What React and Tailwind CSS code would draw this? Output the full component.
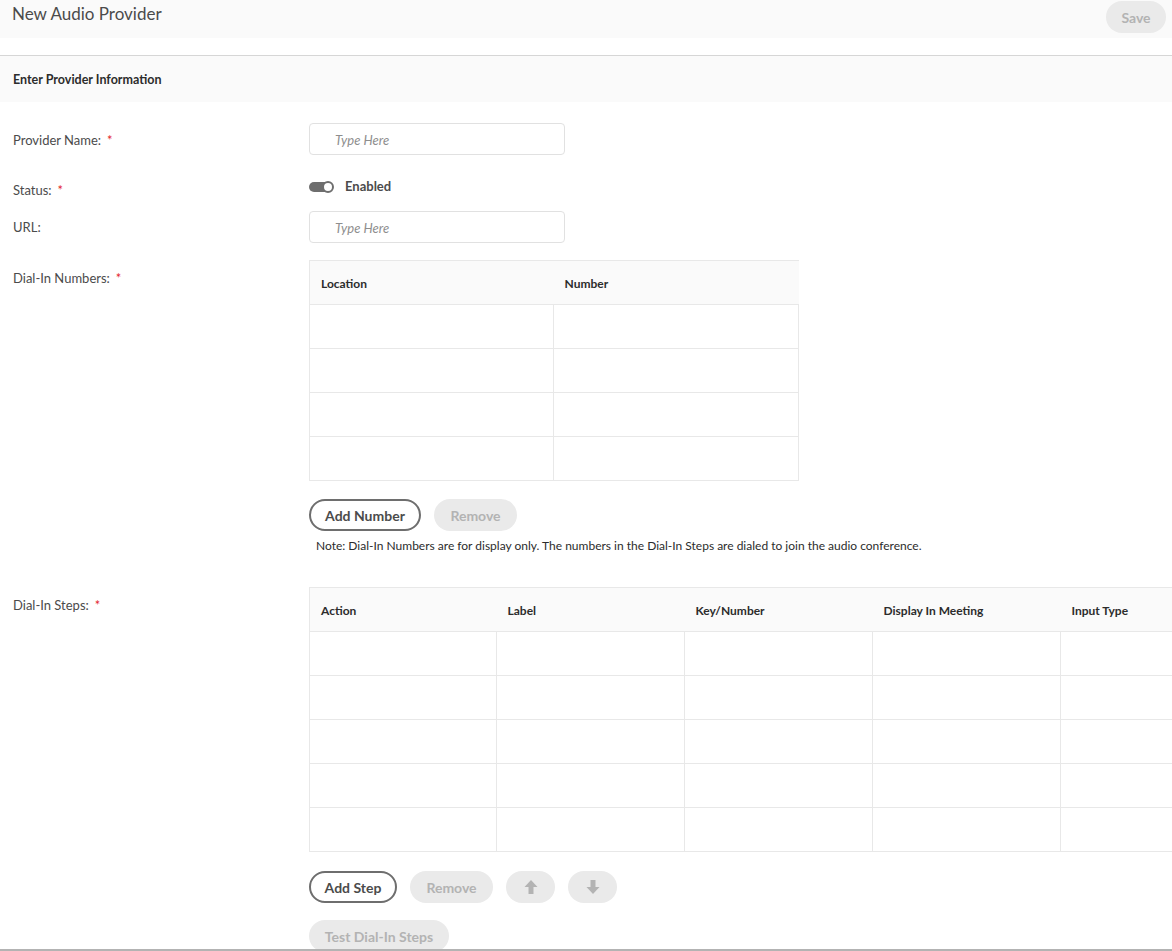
import React from "react";

const Req = () => <span className="ml-[6px] text-[#e3262d]">*</span>;

const Label = ({ children, required, className = "" }) => (
    <div className={"w-[296px] shrink-0 text-[13px] leading-4 text-[#4b4b4b] " + className}>
        {children}
        {required && <Req />}
    </div>
);

const TextInput = () => (
    <div className="w-[256px] h-[32px] rounded-[4px] border border-[#e1e1e1] bg-white flex items-center pl-[25px] pt-[3px] text-[13px] italic text-[#8e8e8e]">
        Type Here
    </div>
);

const PillButton = ({ children, primary, className = "" }) => (
    <button
        className={
            "h-[32px] rounded-full text-[14px] font-bold flex items-center justify-center " +
            (primary
                ? "border-2 border-[#6e6e6e] text-[#4b4b4b] bg-white "
                : "bg-[#eaeaea] text-[#b3b3b3] ") +
            className
        }
    >
        {children}
    </button>
);

const Arrow = ({ down }) => (
    <svg width="16" height="16" viewBox="0 0 16 16" className={down ? "rotate-180" : ""}>
        <path d="M8 1 L14.5 8 H10.5 V15 H5.5 V8 H1.5 Z" fill="#b3b3b3" />
    </svg>
);

const Grid = ({ cols, widths, rows }) => (
    <table className="border-collapse shrink-0 text-[12px]">
        <thead>
            <tr className="h-[44px] bg-[#fafafa]">
                {cols.map((c, i) => (
                    <th
                        key={i}
                        style={{ width: widths[i] }}
                        className="border border-[#e8e8e8] border-x-0 first:border-l text-left pl-[11px] pt-[2px] font-bold text-[#2c2c2c]"
                    >
                        {c}
                    </th>
                ))}
            </tr>
        </thead>
        <tbody>
            {Array.from({ length: rows }).map((_, r) => (
                <tr key={r} className="h-[44px]">
                    {cols.map((c, i) => (
                        <td key={i} className="border border-[#e8e8e8] bg-white"></td>
                    ))}
                </tr>
            ))}
        </tbody>
    </table>
);

export default function App() {
    return (
        <div
            className="relative w-[1172px] h-[951px] overflow-hidden bg-white"
            style={{ fontFamily: "Lato, 'Open Sans', sans-serif" }}
        >
            {/* header */}
            <div className="h-[38px] bg-[#fafafa] flex items-start justify-between pl-[12px] pr-[6px]">
                <h1 className="text-[17px] leading-[22px] mt-[3px] text-[#4b4b4b]">New Audio Provider</h1>
                <PillButton className="w-[60px] mt-[1px] h-[30px]">Save</PillButton>
            </div>
            <div className="h-[17px]"></div>
            <div className="h-[47px] bg-[#fafafa] border-t border-[#d6d6d6] flex items-center pt-[3px] px-[13px] text-[12.5px] font-bold text-[#2c2c2c]">
                Enter Provider Information
            </div>

            <div className="px-[13px]">
                {/* provider name */}
                <div className="flex items-center mt-[21px]">
                    <Label required className="mt-[2px]">Provider Name:</Label>
                    <TextInput />
                </div>

                {/* status */}
                <div className="flex items-center mt-[24px] h-[16px]">
                    <Label required className="mt-[6px]">Status:</Label>
                    <div className="flex items-center">
                        <div className="w-[24px] h-[10px] rounded-full bg-[#6e6e6e] relative">
                            <div className="absolute right-[-1px] top-[-1px] w-[12px] h-[12px] rounded-full bg-white border-2 border-[#6e6e6e]"></div>
                        </div>
                        <span className="ml-[12px] text-[13px] font-bold text-[#4b4b4b]">Enabled</span>
                    </div>
                </div>

                {/* url */}
                <div className="flex items-center mt-[16px]">
                    <Label>URL:</Label>
                    <TextInput />
                </div>

                {/* dial-in numbers */}
                <div className="flex items-start mt-[17px]">
                    <Label required className="mt-[10px]">Dial-In Numbers:</Label>
                    <div>
                        <Grid cols={["Location", "Number"]} widths={[244, 245]} rows={4} />
                        <div className="flex gap-[13px] mt-[18px]">
                            <PillButton primary className="w-[112px]">Add Number</PillButton>
                            <PillButton className="w-[83px]">Remove</PillButton>
                        </div>
                        <p className="mt-[7px] ml-[7px] text-[12px] leading-4 text-[#2c2c2c]">
                            Note: Dial-In Numbers are for display only. The numbers in the Dial-In Steps are dialed to join the audio conference.
                        </p>
                    </div>
                </div>

                {/* dial-in steps */}
                <div className="flex items-start mt-[33px]">
                    <Label required className="mt-[10px]">Dial-In Steps:</Label>
                    <div className="shrink-0">
                        <Grid
                            cols={["Action", "Label", "Key/Number", "Display In Meeting", "Input Type"]}
                            widths={[187, 188, 188, 188, 188]}
                            rows={5}
                        />
                        <div className="flex gap-[13px] mt-[19px]">
                            <PillButton primary className="w-[88px]">Add Step</PillButton>
                            <PillButton className="w-[83px]">Remove</PillButton>
                            <PillButton className="w-[49px]"><Arrow /></PillButton>
                            <PillButton className="w-[49px]"><Arrow down /></PillButton>
                        </div>
                        <PillButton className="w-[140px] mt-[17px]">Test Dial-In Steps</PillButton>
                    </div>
                </div>
            </div>

            <div className="absolute left-0 right-0 bottom-0 h-[2px] bg-[#b3b3b3]"></div>
        </div>
    );
}
